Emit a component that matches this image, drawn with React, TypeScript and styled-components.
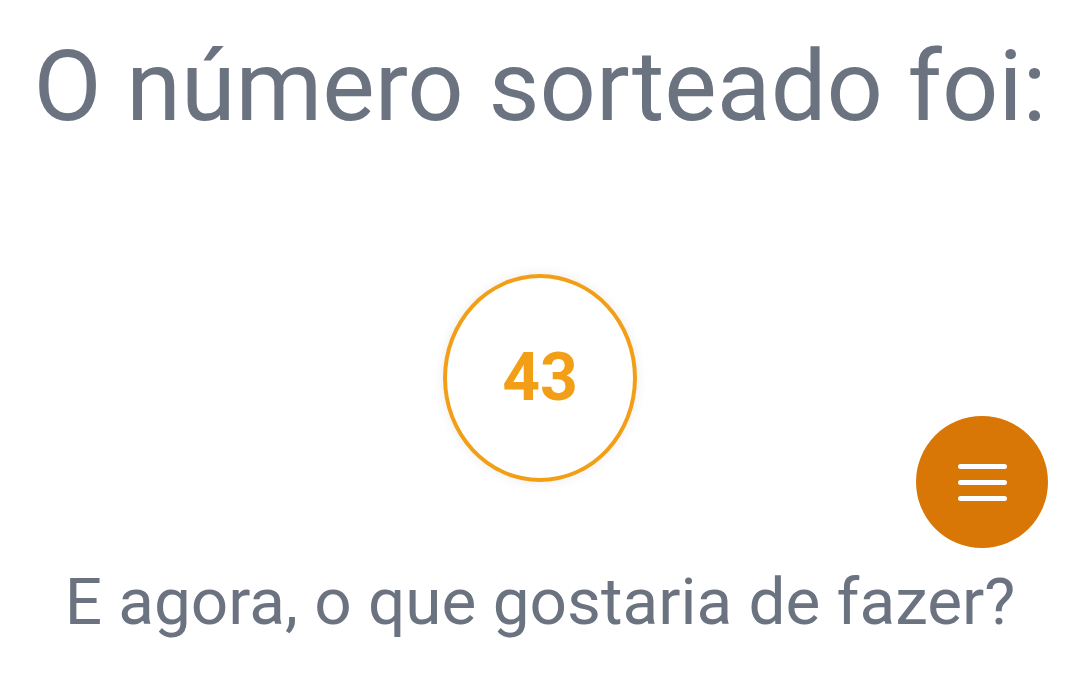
import React from "react";
import styled, { createGlobalStyle } from "styled-components";

const Global = createGlobalStyle`
  html, body { margin: 0; padding: 0; background: #ffffff; }
  body { font-family: Roboto, "Noto Sans", "Liberation Sans", sans-serif; }
  * { box-sizing: border-box; }
`;

const Page = styled.main`
  position: relative;
  width: 1080px;
  height: 683px;
  overflow: hidden;
  display: flex;
  flex-direction: column;
  align-items: center;
  padding-top: 26px;
`;

const Title = styled.h1`
  margin: 0;
  font-size: 99px;
  line-height: 120px;
  font-weight: 400;
  color: #6b7280;
  white-space: nowrap;
`;

const Ball = styled.div`
  margin-top: 128px;
  width: 194px;
  height: 208px;
  border-radius: 50%;
  border: 4px solid #f29f17;
  box-shadow: 0 0 12px rgba(0, 0, 0, 0.08);
  display: flex;
  align-items: center;
  justify-content: center;
`;

const Number = styled.span`
  font-size: 66px;
  font-weight: 700;
  color: #f29f17;
  line-height: 1;
`;

const Question = styled.p`
  margin: 80px 0 0;
  font-size: 65.7px;
  line-height: 79px;
  font-weight: 400;
  color: #6b7280;
  white-space: nowrap;
`;

const Fab = styled.button`
  position: absolute;
  right: 32px;
  top: 416px;
  width: 132px;
  height: 132px;
  border-radius: 50%;
  border: none;
  background: #d97706;
  display: flex;
  flex-direction: column;
  align-items: center;
  justify-content: center;
  gap: 11px;
  padding: 0;
  cursor: pointer;
`;

const Line = styled.span`
  display: block;
  width: 49px;
  height: 5px;
  border-radius: 3px;
  background: #ffffff;
`;

export default function App() {
  return (
    <>
      <Global />
      <Page>
        <Title>O número sorteado foi:</Title>
        <Ball>
          <Number>43</Number>
        </Ball>
        <Question>E agora, o que gostaria de fazer?</Question>
        <Fab aria-label="menu">
          <Line />
          <Line />
          <Line />
        </Fab>
      </Page>
    </>
  );
}
